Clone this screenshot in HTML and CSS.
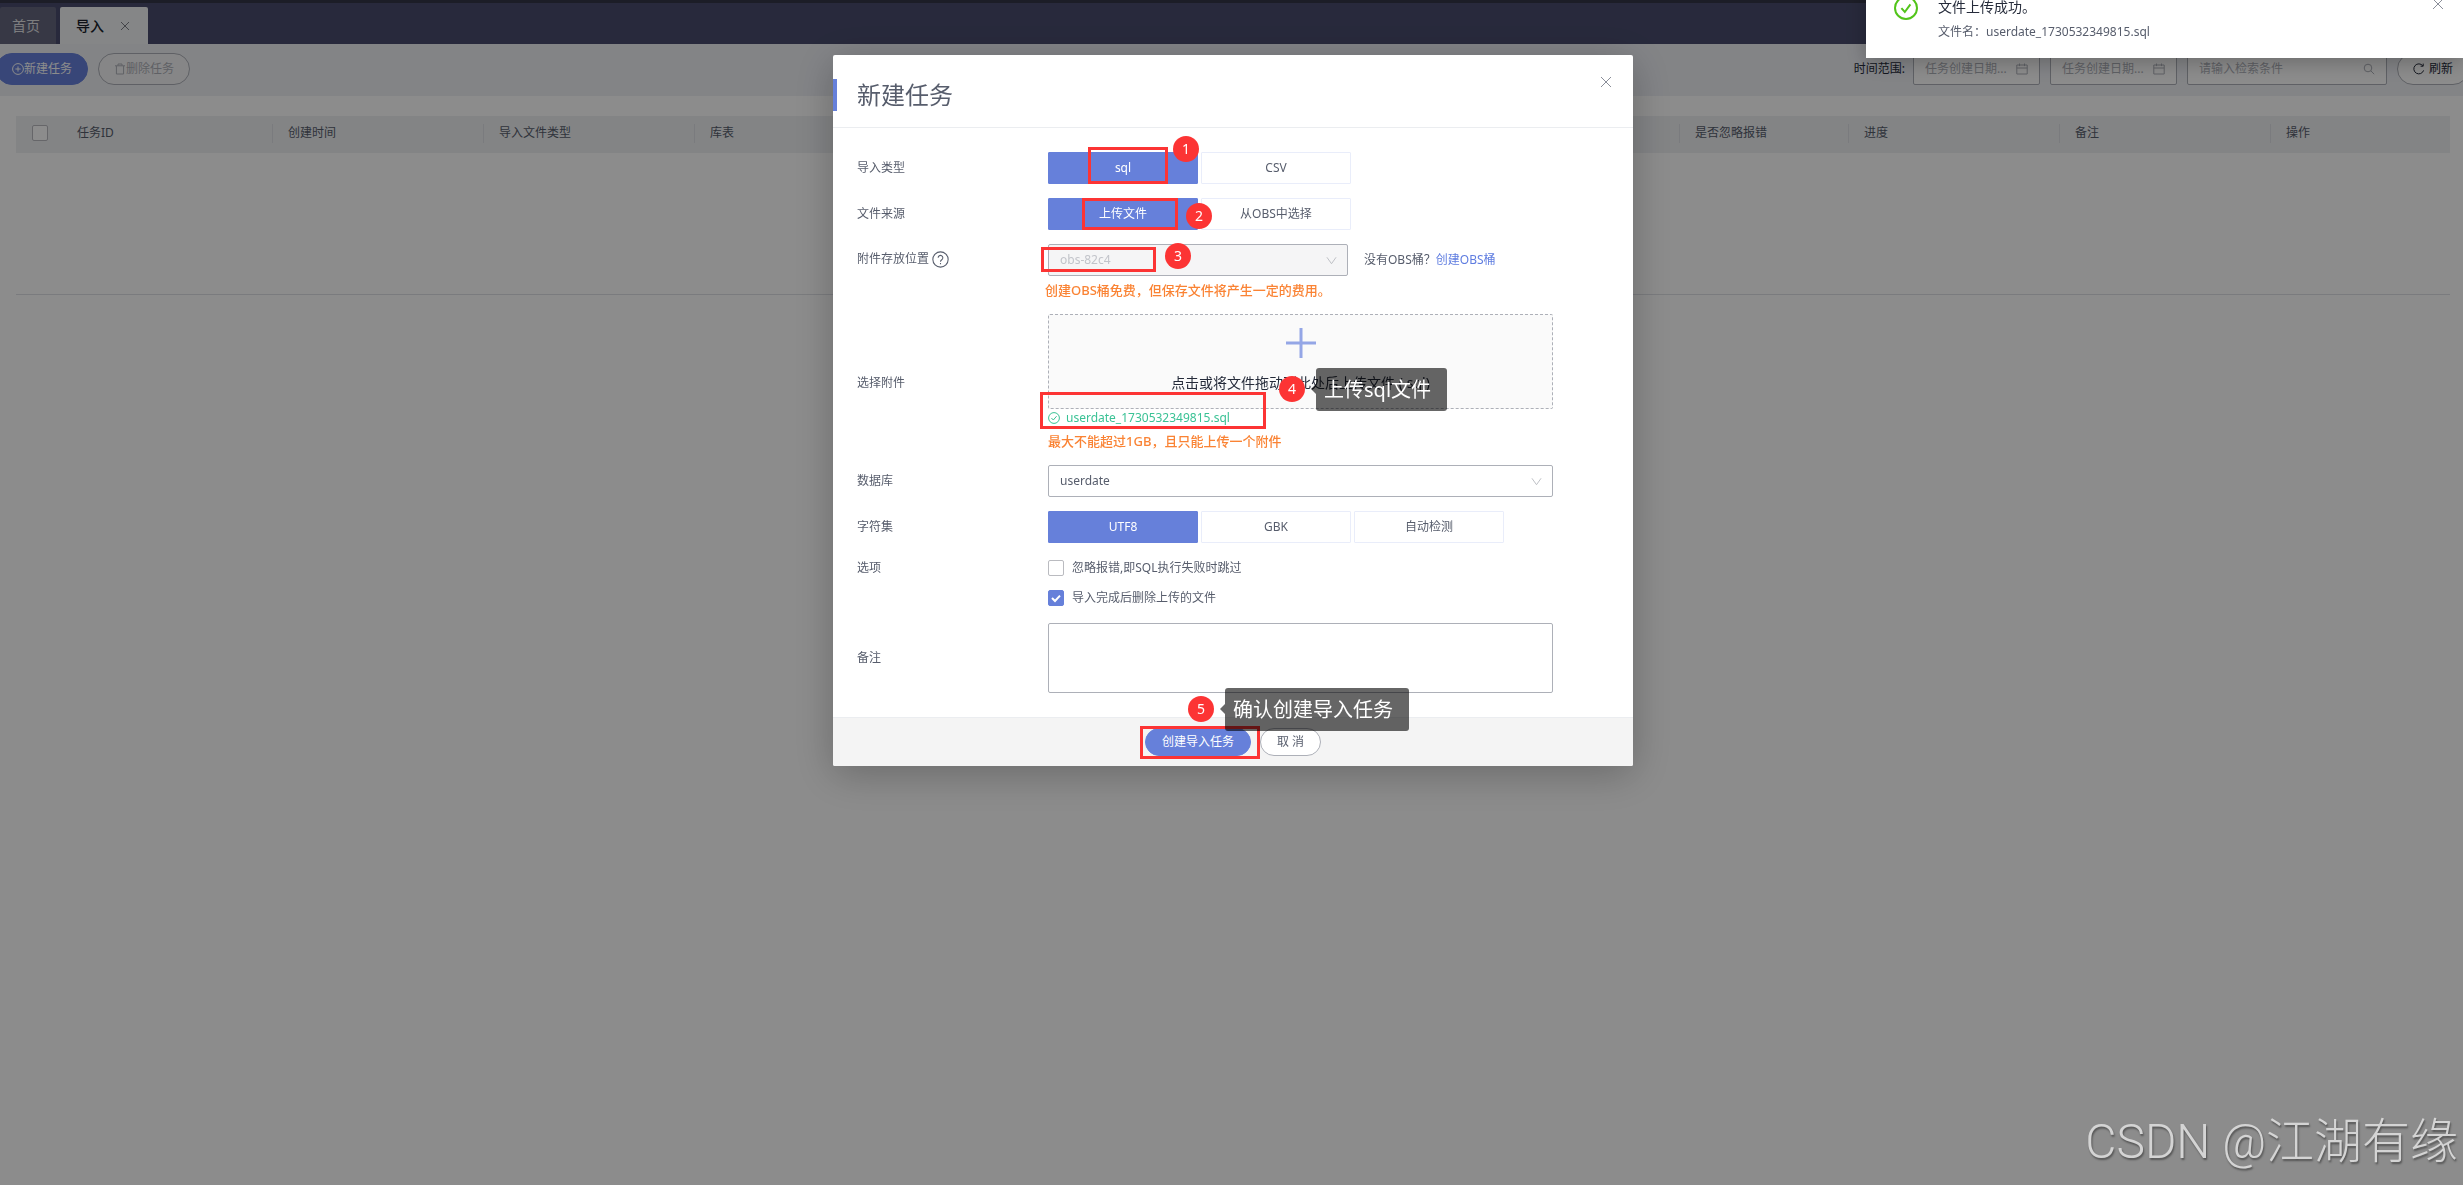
FILE: index.html
```html
<!DOCTYPE html>
<html lang="zh-CN">
<head>
    <meta charset="UTF-8">
    <meta name="viewport" content="width=device-width, initial-scale=1.0">
    <title>导入</title>
    <link rel="stylesheet" href="styles.css">
</head>
<body>
    <nav class="tabs">
        <a class="tab" href="#">首页</a>
        <a class="tab active" href="#">导入
            <svg class="tab-close" viewBox="0 0 10 10"><path d="M1 1l8 8M9 1l-8 8"/></svg>
        </a>
    </nav>

    <div class="toolbar">
        <div class="toolbar-actions">
            <button class="btn btn-primary" type="button">
                <svg class="icon" viewBox="0 0 12 12"><circle cx="6" cy="6" r="5.4"/><path d="M6 3.4v5.2M3.4 6h5.2"/></svg>新建任务
            </button>
            <button class="btn" type="button" disabled>
                <svg class="icon" viewBox="0 0 12 12"><path d="M1 2.8h10M4 2.6V1h4v1.6M2.4 3v8h7.2V3"/></svg>删除任务
            </button>
        </div>
        <div class="toolbar-search">
            <label class="range-label" for="dateFrom">时间范围:</label>
            <div class="field field-date">
                <input type="text" id="dateFrom" placeholder="任务创建日期...">
                <svg class="icon" viewBox="0 0 12 12"><path d="M.8 2h10.4v9H.8zM.8 5h10.4M3.5.5v2.6M8.5.5v2.6"/></svg>
            </div>
            <div class="field field-date">
                <input type="text" id="dateTo" aria-label="结束日期" placeholder="任务创建日期...">
                <svg class="icon" viewBox="0 0 12 12"><path d="M.8 2h10.4v9H.8zM.8 5h10.4M3.5.5v2.6M8.5.5v2.6"/></svg>
            </div>
            <div class="field field-keyword">
                <input type="text" id="keyword" aria-label="检索条件" placeholder="请输入检索条件">
                <svg class="icon" viewBox="0 0 12 12"><circle cx="5" cy="5" r="3.8"/><path d="M7.8 7.8l3.4 3.4"/></svg>
            </div>
            <button class="btn btn-refresh" type="button">
                <svg class="icon" viewBox="0 0 12 12"><path d="M10.6 7.4a5 5 0 1 1-.8-4.6M10.2.6v2.6H7.6"/></svg>
                刷新
            </button>
        </div>
    </div>

    <main class="content">
        <table class="task-table">
            <colgroup>
                <col class="col-check">
                <col class="col-data">
                <col class="col-data">
                <col class="col-data">
                <col class="col-data">
                <col>
                <col class="col-error">
                <col class="col-data">
                <col class="col-data">
                <col class="col-action">
            </colgroup>
            <thead>
                <tr>
                    <th><input type="checkbox" aria-label="全选"></th>
                    <th>任务ID</th>
                    <th>创建时间</th>
                    <th>导入文件类型</th>
                    <th>库表</th>
                    <th></th>
                    <th>是否忽略报错</th>
                    <th>进度</th>
                    <th>备注</th>
                    <th>操作</th>
                </tr>
            </thead>
            <tbody>
                <tr><td colspan="10"></td></tr>
            </tbody>
        </table>
    </main>

    <div class="overlay">
        <div class="modal" role="dialog" aria-labelledby="modalTitle">
            <div class="modal-header">
                <h2 id="modalTitle">新建任务</h2>
                <button class="close-btn" type="button" aria-label="关闭">
                    <svg viewBox="0 0 12 12"><path d="M1 1l10 10M11 1L1 11"/></svg>
                </button>
            </div>

            <form id="taskForm">
                <div class="modal-body">
                    <div class="form-row">
                        <span class="form-label">导入类型</span>
                        <div class="form-control segments">
                            <label class="segment"><input type="radio" name="importType" checked><span>sql</span></label>
                            <label class="segment"><input type="radio" name="importType"><span>CSV</span></label>
                            <div class="mark mark-type"></div>
                            <div class="step step-1">1</div>
                        </div>
                    </div>

                    <div class="form-row">
                        <span class="form-label">文件来源</span>
                        <div class="form-control segments">
                            <label class="segment"><input type="radio" name="source" checked><span>上传文件</span></label>
                            <label class="segment"><input type="radio" name="source"><span>从OBS中选择</span></label>
                            <div class="mark mark-source"></div>
                            <div class="step step-2">2</div>
                        </div>
                    </div>

                    <div class="form-row form-row-top">
                        <label class="form-label" for="bucket">附件存放位置
                            <svg class="help" viewBox="0 0 16 16"><circle cx="8" cy="8" r="7.2"/><path d="M5.8 6.4a2.2 2.2 0 1 1 3.4 1.8c-.8.5-1.2.8-1.2 1.8M8 11.2v1.2"/></svg>
                        </label>
                        <div class="form-control">
                            <div class="bucket-line">
                                <div class="select-box bucket-select">
                                    <select id="bucket" disabled><option>obs-82c4</option></select>
                                    <svg class="arrow" viewBox="0 0 12 12"><path d="M1 2.5l5 7 5-7"/></svg>
                                </div>
                                <span>没有OBS桶？<a href="#">创建OBS桶</a></span>
                            </div>
                            <p class="hint hint-bucket">创建OBS桶免费，但保存文件将产生一定的费用。</p>
                            <div class="mark mark-bucket"></div>
                            <div class="step step-3">3</div>
                        </div>
                    </div>

                    <div class="form-row">
                        <span class="form-label">选择附件</span>
                        <div class="form-control">
                            <button class="dropzone" type="button">
                                <svg class="plus" viewBox="0 0 30 30"><path d="M15 0v30M0 15h30"/></svg>
                                <span>点击或将文件拖动到此处后上传文件 (.sql)</span>
                            </button>
                            <div class="file-item">
                                <svg class="icon" viewBox="0 0 12 12"><circle cx="6" cy="6" r="5.4"/><path d="M3.4 6l1.9 2 3.3-3.8"/></svg>
                                userdate_1730532349815.sql
                            </div>
                            <p class="hint">最大不能超过1GB，且只能上传一个附件</p>
                            <div class="mark mark-file"></div>
                            <div class="step step-4">4</div>
                            <div class="tip tip-4">上传sql文件</div>
                        </div>
                    </div>

                    <div class="form-row">
                        <label class="form-label" for="database">数据库</label>
                        <div class="form-control">
                            <div class="select-box">
                                <select id="database"><option>userdate</option></select>
                                <svg class="arrow" viewBox="0 0 12 12"><path d="M1 2.5l5 7 5-7"/></svg>
                            </div>
                        </div>
                    </div>

                    <div class="form-row">
                        <span class="form-label">字符集</span>
                        <div class="form-control segments">
                            <label class="segment"><input type="radio" name="charset" checked><span>UTF8</span></label>
                            <label class="segment"><input type="radio" name="charset"><span>GBK</span></label>
                            <label class="segment"><input type="radio" name="charset"><span>自动检测</span></label>
                        </div>
                    </div>

                    <div class="form-row form-row-options">
                        <span class="form-label">选项</span>
                        <div class="form-control options">
                            <label class="option"><input type="checkbox">忽略报错,即SQL执行失败时跳过</label>
                            <label class="option"><input type="checkbox" checked>导入完成后删除上传的文件</label>
                        </div>
                    </div>

                    <div class="form-row">
                        <label class="form-label" for="remark">备注</label>
                        <div class="form-control">
                            <textarea id="remark"></textarea>
                        </div>
                    </div>
                </div>

                <div class="modal-footer">
                    <div class="submit-wrap">
                        <button class="btn btn-primary" type="submit">创建导入任务</button>
                        <div class="mark mark-submit"></div>
                        <div class="step step-5">5</div>
                        <div class="tip tip-5">确认创建导入任务</div>
                    </div>
                    <button class="btn" type="button">取 消</button>
                </div>
            </form>
        </div>
    </div>

    <div class="toast" role="status">
        <svg class="toast-icon" viewBox="0 0 24 24"><circle cx="12" cy="12" r="11"/><path d="M7.4 12.2l3.4 3.8 5.6-7.6"/></svg>
        <div class="toast-text">
            <strong>文件上传成功。</strong>
            <p>文件名：userdate_1730532349815.sql</p>
        </div>
        <button class="toast-close" type="button" aria-label="关闭">
            <svg viewBox="0 0 12 12"><path d="M1 1l10 10M11 1L1 11"/></svg>
        </button>
    </div>

    <div class="watermark">CSDN @江湖有缘</div>
</body>
</html>
```

FILE: styles.css
```css
* {
    box-sizing: border-box;
}
body {
    margin: 0;
    min-height: 100vh;
    overflow: hidden;
    background-color: #fff;
    color: #575d6c;
    font-family: "Noto Sans", "Noto Sans CJK SC", sans-serif;
    font-size: 12px;
    line-height: 18px;
}
button, input, select, textarea {
    font: inherit;
    color: inherit;
}
p, h2 {
    margin: 0;
}
a {
    color: #5e7ce0;
    text-decoration: none;
}
svg {
    flex: none;
    fill: none;
    stroke: currentColor;
}
.icon {
    width: 12px;
    height: 12px;
}

/* tabs */
.tabs {
    display: flex;
    gap: 4px;
    height: 44px;
    padding-top: 4px;
    border-top: 3px solid #343648;
    background-color: #494c6d;
}
.tab {
    display: flex;
    align-items: center;
    gap: 16px;
    padding: 0 16px 0 12px;
    border-radius: 2px 2px 0 0;
    background-color: #64677f;
    color: #e3e3e6;
    font-size: 14px;
}
.tab.active {
    padding: 0 18px 0 16px;
    background-color: #f3f4f6;
    color: #191f2d;
    font-weight: 500;
}
.tab-close {
    width: 10px;
    height: 10px;
    color: #7c7f86;
}

/* toolbar */
.toolbar {
    display: flex;
    justify-content: space-between;
    height: 52px;
    padding-top: 9px;
    background-color: #eef0f5;
}
.toolbar-actions {
    display: flex;
    gap: 10px;
    margin-left: -4px;
}
.toolbar-search {
    display: flex;
    gap: 10px;
    margin-right: -6px;
}
.btn {
    display: flex;
    align-items: center;
    justify-content: center;
    height: 32px;
    padding: 0 15px;
    border: 1px solid #adb0b8;
    border-radius: 16px;
    background-color: #fff;
    white-space: nowrap;
}
.btn:disabled {
    background-color: #f5f5f6;
    color: #adb0b8;
}
.btn-primary {
    border-color: #6680da;
    background-color: #6680da;
    color: #fff;
}
.btn-refresh {
    gap: 4px;
    color: #252b3a;
}
.range-label {
    margin-right: -2px;
    color: #252b3a;
    line-height: 32px;
}
.field {
    display: flex;
    align-items: center;
    height: 32px;
    padding: 0 11px;
    border: 1px solid #adb0b8;
    border-radius: 2px;
    background-color: #fff;
    color: #adb0b8;
}
.field input {
    flex: 1;
    min-width: 0;
    padding: 0;
    border: none;
    outline: none;
    background: none;
}
.field input::placeholder {
    color: #adb0b8;
}
.field-date {
    width: 127px;
}
.field-keyword {
    width: 200px;
}

/* task table */
.content {
    padding: 20px 13px 0 16px;
}
.task-table {
    width: 100%;
    border-collapse: collapse;
    table-layout: fixed;
}
.col-check {
    width: 45px;
}
.col-data {
    width: 211px;
}
.col-error {
    width: 169px;
}
.col-action {
    width: 180px;
}
.task-table th {
    height: 37px;
    padding: 0 16px 4px;
    background-color: #eef0f3;
    font-weight: normal;
    text-align: left;
}
.task-table th:nth-child(n+3) {
    background-image: linear-gradient(#dfe1e6, #dfe1e6);
    background-position: 0 8px;
    background-repeat: no-repeat;
    background-size: 1px 19px;
}
.task-table td {
    height: 141px;
    border-bottom: 1px solid #dfe1e6;
}
input[type="checkbox"] {
    display: block;
    width: 16px;
    height: 16px;
    margin: 0;
    border: 1px solid #babbc0;
    border-radius: 2px;
    appearance: none;
    background-color: #fff;
}
input[type="checkbox"]:checked {
    border-color: #6680da;
    background: #6680da url("data:image/svg+xml,%3Csvg xmlns='http://www.w3.org/2000/svg' viewBox='0 0 14 14'%3E%3Cpath d='M3 7l3 3 5-5.4' fill='none' stroke='white' stroke-width='2'/%3E%3C/svg%3E");
}

/* modal */
.overlay {
    position: fixed;
    inset: 0;
    display: flex;
    align-items: flex-start;
    justify-content: center;
    padding: 55px 0 0 3px;
    background-color: rgba(0, 0, 0, 0.45);
}
.modal {
    width: 800px;
    border-radius: 2px;
    background-color: #fff;
    box-shadow: 0 8px 40px rgba(0, 0, 0, 0.25);
}
.modal-header {
    display: flex;
    justify-content: space-between;
    padding: 24px 16px 16px 0;
    border-bottom: 1px solid #ebedf0;
}
.modal-header h2 {
    padding-left: 20px;
    border-left: 4px solid #6680da;
    font-size: 24px;
    font-weight: normal;
    line-height: 32px;
}
.close-btn, .toast-close {
    display: flex;
    align-items: center;
    justify-content: center;
    width: 22px;
    height: 22px;
    margin-top: -8px;
    padding: 0;
    border: none;
    background: none;
    color: #8a8e99;
}
.close-btn svg, .toast-close svg {
    width: 12px;
    height: 12px;
}
.modal-body {
    display: flex;
    flex-direction: column;
    gap: 14px;
    padding: 24px 80px 24px 24px;
}
.form-row {
    display: grid;
    grid-template-columns: 191px 1fr;
    align-items: center;
}
.form-row-top, .form-row-options {
    align-items: start;
}
.form-label {
    display: flex;
    align-items: center;
    gap: 3px;
}
.form-row-top .form-label {
    height: 30px;
}
.form-row-options .form-label {
    height: 22px;
}
.help {
    width: 17px;
    height: 17px;
}
.form-control {
    position: relative;
}
.segments {
    display: flex;
    gap: 3px;
}
.segment input {
    position: absolute;
    opacity: 0;
}
.segment span {
    display: block;
    width: 150px;
    border: 1px solid #e9edfa;
    border-radius: 1px;
    line-height: 30px;
    text-align: center;
}
.segment input:checked + span {
    border-color: #6680da;
    background-color: #6680da;
    color: #fff;
}
.bucket-line {
    display: flex;
    align-items: center;
    gap: 16px;
}
.bucket-select {
    width: 300px;
}
.select-box {
    display: grid;
    align-items: center;
}
.select-box select, .arrow {
    grid-area: 1 / 1;
}
.select-box select {
    width: 100%;
    height: 32px;
    padding: 0 11px;
    border: 1px solid #adb0b8;
    border-radius: 2px;
    appearance: none;
    background-color: #fff;
}
.select-box select:disabled {
    background-color: #f5f5f6;
    color: #c2c4ca;
    opacity: 1;
}
.arrow {
    justify-self: end;
    width: 11px;
    height: 11px;
    margin-right: 11px;
    color: #b9bbc1;
    pointer-events: none;
}
.hint {
    margin-top: 4px;
    color: #fa8334;
    font-size: 13px;
    font-weight: 500;
    line-height: 20px;
}
.hint-bucket {
    margin-left: -3px;
}
.dropzone {
    display: flex;
    flex-direction: column;
    align-items: center;
    gap: 14px;
    width: 100%;
    height: 95px;
    padding: 13px 0 0;
    border: 1px dashed #adb0b8;
    border-radius: 2px;
    background-color: #fafafa;
    color: #252b3a;
    font-size: 14px;
    line-height: 22px;
}
.plus {
    width: 30px;
    height: 30px;
    color: #94a6e6;
    stroke-width: 3;
}
.file-item {
    display: flex;
    align-items: center;
    gap: 6px;
    color: #3ac295;
}
.options {
    display: flex;
    flex-direction: column;
    gap: 8px;
}
.option {
    display: flex;
    align-items: center;
    gap: 8px;
    height: 22px;
}
textarea {
    display: block;
    width: 100%;
    height: 70px;
    border: 1px solid #adb0b8;
    border-radius: 2px;
    resize: none;
}
.modal-footer {
    display: flex;
    justify-content: center;
    gap: 9px;
    padding: 10px 0;
    border-top: 1px solid #ebedf0;
    border-radius: 0 0 2px 2px;
    background-color: #f4f4f4;
}
.modal-footer .btn {
    height: 28px;
    padding: 0 16px;
}
.submit-wrap {
    position: relative;
}

/* step marks over the form */
.mark {
    position: absolute;
    border: 3px solid #fc3434;
}
.step {
    position: absolute;
    width: 26px;
    height: 26px;
    border-radius: 50%;
    background-color: #fc3434;
    color: #fff;
    font-size: 14px;
    line-height: 25px;
    text-align: center;
}
.tip {
    position: absolute;
    padding: 0 16px 0 8px;
    border-radius: 3px;
    background-color: rgba(0, 0, 0, 0.6);
    color: #fff;
    font-size: 20px;
    line-height: 43px;
    white-space: nowrap;
}
.tip::before {
    content: "";
    position: absolute;
    top: 16px;
    right: 100%;
    border: 5px solid transparent;
    border-left: none;
    border-right-color: rgba(0, 0, 0, 0.6);
}
.mark-type {
    top: -5px;
    left: 40px;
    width: 80px;
    height: 37px;
}
.step-1 {
    top: -16px;
    left: 125px;
}
.mark-source {
    top: 0;
    left: 34px;
    width: 96px;
    height: 32px;
}
.step-2 {
    top: 5px;
    left: 138px;
}
.mark-bucket {
    top: 3px;
    left: -7px;
    width: 115px;
    height: 25px;
}
.step-3 {
    top: -1px;
    left: 117px;
}
.mark-file {
    top: 78px;
    left: -8px;
    width: 226px;
    height: 37px;
}
.step-4 {
    top: 62px;
    left: 231px;
}
.tip-4 {
    top: 54px;
    left: 268px;
}
.mark-submit {
    top: -2px;
    left: -5px;
    width: 120px;
    height: 33px;
}
.step-5 {
    top: -32px;
    left: 43px;
}
.tip-5 {
    top: -40px;
    left: 80px;
    z-index: 1;
}

/* upload notice */
.toast {
    position: fixed;
    top: -24px;
    right: 0;
    display: flex;
    width: 597px;
    padding: 20px 14px 17px 28px;
    background-color: #fff;
    box-shadow: 0 4px 20px rgba(0, 0, 0, 0.25);
}
.toast-icon {
    width: 24px;
    height: 24px;
    color: #52c41a;
    stroke-width: 2;
}
.toast-text {
    flex: 1;
    padding-left: 20px;
}
.toast-text strong {
    display: block;
    margin-bottom: 5px;
    color: #252b3a;
    font-size: 14px;
    font-weight: normal;
    line-height: 22px;
}
.toast-close {
    margin-top: -3px;
}

.watermark {
    position: fixed;
    right: 5px;
    bottom: 11px;
    color: #d4d4d4;
    font-family: Roboto, "Noto Sans CJK SC", sans-serif;
    font-size: 48px;
    font-weight: 300;
    line-height: 64px;
    text-shadow: 1px 2px 2px rgba(0, 0, 0, 0.4);
}
```
